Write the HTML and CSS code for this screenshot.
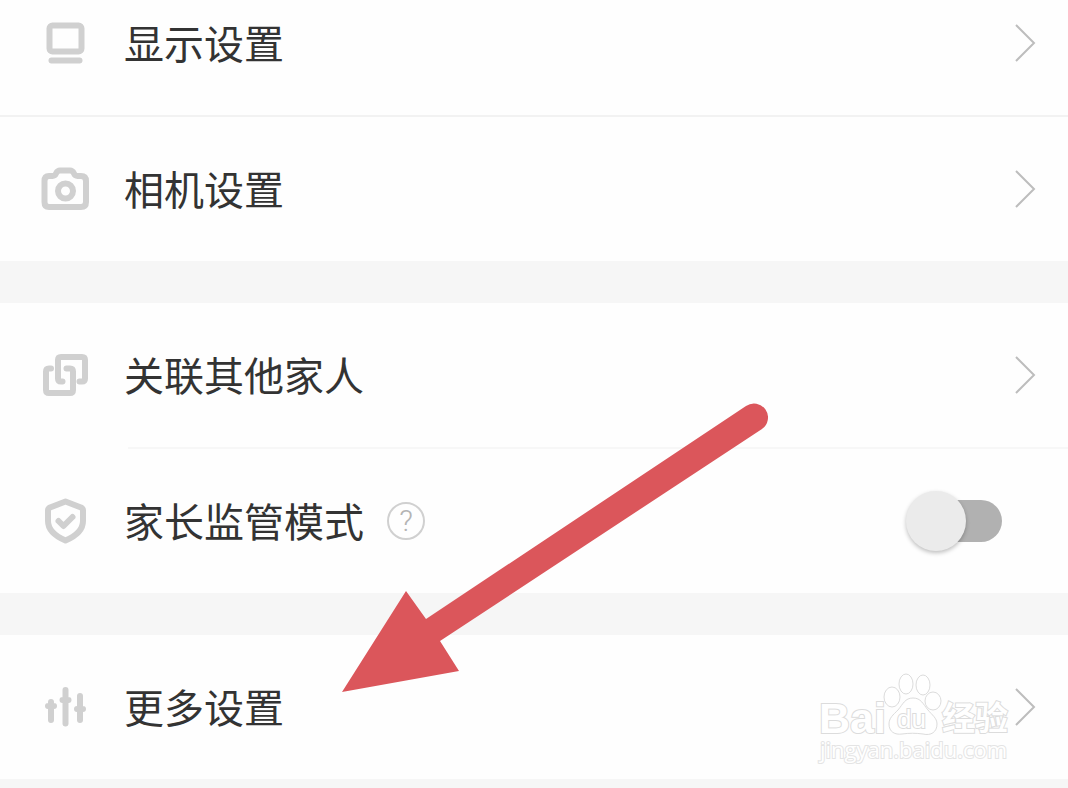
FILE: index.html
```html
<!DOCTYPE html>
<html lang="zh-CN">
    <head>
        <meta charset="UTF-8" />
        <meta name="viewport" content="width=device-width, initial-scale=1.0" />
        <title>设置</title>
        <link rel="stylesheet" href="styles.css">
    </head>
    <body>
        <main class="settings">
            <section class="group">
                <a class="row row-first" href="#display">
                    <svg class="icon" viewBox="0 0 48 48" aria-hidden="true">
                        <rect x="8.5" y="6.5" width="32" height="26" rx="3" />
                        <path d="M10.5 41.5H38.5" />
                    </svg>
                    <span class="title">显示设置</span>
                    <svg class="chevron" viewBox="0 0 22 38" aria-hidden="true"><path d="M2 1L20 19L2 37" /></svg>
                </a>
                <div class="divider"></div>
                <a class="row" href="#camera">
                    <svg class="icon" viewBox="0 0 48 48" aria-hidden="true">
                        <path d="M8 11H11.5Q14 11 15 8.5Q16.5 5.5 19 5.5H29Q31.500 5.5 33 8.5Q34 11 36.5 11H40Q45 11 45 16V37Q45 42 40 42H8Q3.5 42 3.5 37V16Q3.5 11 8 11Z" />
                        <circle cx="24.5" cy="26" r="7.5" />
                    </svg>
                    <span class="title">相机设置</span>
                    <svg class="chevron" viewBox="0 0 22 38" aria-hidden="true"><path d="M2 1L20 19L2 37" /></svg>
                </a>
            </section>

            <section class="group">
                <a class="row" href="#family">
                    <svg class="icon" viewBox="0 0 48 48" aria-hidden="true">
                        <path d="M10 17.5H8Q5 17.5 5 20.500V39Q5 42 8 42H29Q32 42 32 39V20.5Q32 17.5 29 17.5H25.500" />
                        <path d="M21.5 30.5H20Q17 30.5 17 27.5V9Q17 6 20 6H41Q44 6 44 9V27.5Q44 30.5 41 30.5H38.5" />
                    </svg>
                    <span class="title">关联其他家人</span>
                    <svg class="chevron" viewBox="0 0 22 38" aria-hidden="true"><path d="M2 1L20 19L2 37" /></svg>
                </a>
                <div class="divider divider-inset"></div>
                <div class="row">
                    <svg class="icon" viewBox="0 0 48 48" aria-hidden="true">
                        <path d="M24.5 4.5L40 10.5Q42 11.5 42 13.5V24Q42 36 24.5 43.5Q7 36 7 24V13.5Q7 11.5 9 10.5Z" />
                        <path d="M17.5 24L22.5 29L31.5 20" />
                    </svg>
                    <label class="title" for="guard">家长监管模式</label>
                    <button class="help" type="button" aria-label="家长监管模式说明">?</button>
                    <input class="switch" type="checkbox" id="guard" />
                </div>
            </section>

            <section class="group">
                <a class="row" href="#more">
                    <svg class="icon" viewBox="0 0 48 48" aria-hidden="true">
                        <path d="M10 19V37M24.5 7V40.5M39 13V37M7 23H13M21.5 17H27.5M36 26H42" />
                    </svg>
                    <span class="title">更多设置</span>
                    <svg class="chevron" viewBox="0 0 22 38" aria-hidden="true"><path d="M2 1L20 19L2 37" /></svg>
                </a>
                <svg class="watermark" viewBox="0 0 200 100">
                    <text class="brand" x="3" y="63">Bai</text>
                    <ellipse cx="76" cy="27" rx="8" ry="10" />
                    <ellipse cx="90" cy="14" rx="7" ry="10" />
                    <ellipse cx="107" cy="15" rx="7" ry="10" />
                    <ellipse cx="117" cy="31" rx="8" ry="9" />
                    <path d="M97 28C89 28 87 34 82 40C77 45 73 48 73 54C73 62 79 65 86 64C93 63 100 63 107 64C115 66 121 62 121 54C121 48 116 45 112 40C107 34 105 28 97 28Z" />
                    <text class="du" x="81" y="58">du</text>
                    <text class="cn" x="126" y="60">经验</text>
                    <text class="site" x="4" y="88">jingyan.baidu.com</text>
                </svg>
            </section>

            <svg class="arrow" viewBox="0 0 426 290" aria-hidden="true">
                <path d="M0 289L64 188L84 216L404 3A14 14 0 0 1 420 26L98 238L117 268Z" />
            </svg>
        </main>
    </body>
</html>
```
FILE: styles.css
```css
body {
    margin: 0;
    background-color: #f6f6f6;
    font-family: "Noto Sans CJK SC", "Noto Sans", sans-serif;
    color: #333;
}

.settings {
    position: relative;
    display: flex;
    flex-direction: column;
    gap: 42px;
    padding-bottom: 9px;
    overflow: hidden;
}

.group {
    position: relative;
    background-color: #fefefe;
}

.row {
    display: flex;
    align-items: center;
    padding: 48px 32px 48px 41px;
    color: inherit;
    text-decoration: none;
}

.row-first {
    padding-top: 19px;
}

.icon {
    flex: none;
    width: 48px;
    height: 48px;
    margin-right: 35px;
    fill: none;
    stroke: #d0d0d0;
    stroke-width: 6;
    stroke-linecap: round;
    stroke-linejoin: round;
}

.title {
    padding-bottom: 2px;
    font-size: 40px;
    line-height: 46px;
    white-space: nowrap;
}

.chevron {
    flex: none;
    width: 22px;
    height: 38px;
    margin-left: auto;
    fill: none;
    stroke: #bdbdbd;
    stroke-width: 2;
}

.divider {
    height: 2px;
    background-color: #f2f2f2;
}

.divider-inset {
    margin-left: 128px;
    background-color: #f7f7f7;
}

.help {
    width: 38px;
    height: 38px;
    margin-left: 23px;
    padding: 0;
    border: 2px solid #d0d0d0;
    border-radius: 50%;
    background: none;
    color: #b4b4b4;
    font-family: "Roboto", sans-serif;
    font-size: 30px;
    font-weight: 300;
    line-height: 34px;
}

.switch {
    appearance: none;
    position: relative;
    width: 94px;
    height: 42px;
    margin: 0 34px 0 auto;
    border-radius: 21px;
    background-color: #b1b1b1;
}

.switch::before {
    content: "";
    position: absolute;
    top: -9px;
    left: -2px;
    width: 60px;
    height: 60px;
    border-radius: 50%;
    background-color: #ebebeb;
    box-shadow: 0 2px 4px rgba(0, 0, 0, 0.25);
}

.switch:checked::before {
    left: 36px;
}

.watermark {
    position: absolute;
    right: 52px;
    bottom: 9px;
    width: 200px;
    height: 100px;
    overflow: visible;
    fill: #fff;
    stroke: #dcdcdc;
    stroke-width: 1;
    pointer-events: none;
}

.watermark text {
    stroke-width: 2;
    paint-order: stroke;
}

.brand {
    font: bold 43px "Liberation Sans", sans-serif;
}

.du {
    font: 26px "Liberation Sans", sans-serif;
}

.cn {
    font: bold 33px "Noto Sans CJK SC", sans-serif;
}

.watermark .site {
    font: 22px "Open Sans", sans-serif;
    stroke: #e4e4e4;
}

.arrow {
    position: absolute;
    top: 403px;
    left: 32%;
    width: 426px;
    height: 290px;
    fill: #db565b;
    pointer-events: none;
}
```
